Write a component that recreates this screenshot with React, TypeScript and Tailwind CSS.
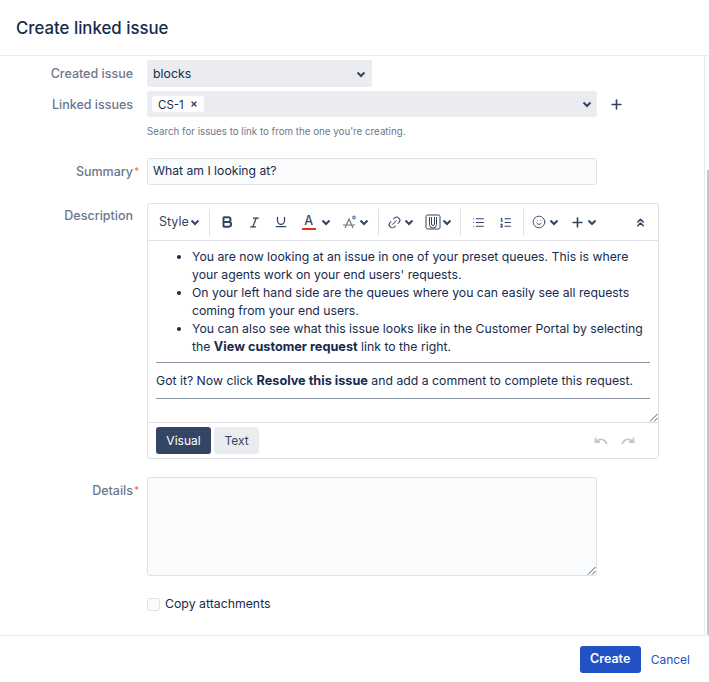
import { Plus, X, Bold, Italic, Underline, Link2, List, ListOrdered, Smile, ChevronsUp } from "lucide-react";

const Caret = ({ className = "" }: { className?: string }) => (
  <svg width="10" height="10" viewBox="0 0 10 10" fill="none" className={className}>
    <path d="M1.5 3.5 5 7l3.5-3.5" stroke="#344563" strokeWidth="2" />
  </svg>
);

const Divider = () => <span className="block w-px h-[27px] bg-[#dfe1e6]" />;

const Grip = () => (
  <svg width="9" height="9" viewBox="0 0 9 9" className="absolute right-0 bottom-0" stroke="#505f79" strokeWidth="1">
    <path d="M1 8.5 8.5 1M5 8.5 8.5 5" />
  </svg>
);

function Field({ label, required, labelClass = "leading-[27px]", children }: { label: string; required?: boolean; labelClass?: string; children: React.ReactNode }) {
  return (
    <div className="flex items-start">
      <label className={`w-[133px] shrink-0 text-right text-[12.5px] text-[#6b778c] font-medium relative ${labelClass}`}>
        {label}
        {required && <span className="absolute left-[134px] top-0 text-[10px] text-[#ff7452]">*</span>}
      </label>
      <div className="ml-[14px] flex-1 min-w-0">{children}</div>
    </div>
  );
}

export default function App() {
  return (
    <div className="w-[709px] h-[682px] bg-white flex flex-col overflow-hidden text-[#172b4d] font-['Inter',sans-serif]">
      {/* Header */}
      <header className="h-[56px] shrink-0 border-b border-[#ebecf0] flex items-center px-4">
        <h1 className="pt-[2px] text-[16.8px] font-medium text-[#172b4d]">Create linked issue</h1>
      </header>

      {/* Body */}
      <div className="flex-1 min-h-0 relative">
        <main className="h-full overflow-hidden pt-1 border-r border-[#ebecf0] mr-1">
          <Field label="Created issue">
            <div className="w-[225px] h-[27px] bg-[#ebecf0] rounded-[3px] flex items-center justify-between pl-[6px] pr-[6px] text-[12.3px]">
              <span className="pt-px">blocks</span>
              <Caret />
            </div>
          </Field>

          <div className="mt-1">
            <Field label="Linked issues">
              <div className="flex items-center">
                <div className="w-[450px] h-[26px] bg-[#ebecf0] rounded-[3px] flex items-center justify-between pl-[5px] pr-[5px]">
                  <span className="h-[16px] bg-white rounded-[3px] flex items-center px-[6px] gap-[6px] text-[11.5px]">
                    <span className="pt-[3px]">CS-1</span>
                    <X size={8} strokeWidth={4} color="#344563" />
                  </span>
                  <Caret />
                </div>
                <Plus size={15} strokeWidth={2.6} color="#344563" className="ml-[12px]" />
              </div>
              <p className="mt-[9px] text-[9.75px] leading-[12px] text-[#6b778c]">
                Search for issues to link to from the one you're creating.
              </p>
            </Field>
          </div>

          <div className="mt-[20px]">
            <Field label="Summary" required>
              <div className="w-[450px] h-[27px] bg-[#fafbfc] border border-[#dfe1e6] rounded-[3px] flex items-center px-[5px] text-[12.2px]">
                What am I looking at?
              </div>
            </Field>
          </div>

          <div className="mt-[18px]">
            <Field label="Description" labelClass="leading-[25px]">
              <div className="w-[512px] h-[256px] border border-[#dfe1e6] rounded-[3px] flex flex-col">
                {/* Toolbar */}
                <div className="h-[37px] shrink-0 border-b border-[#dfe1e6] flex items-center pl-[11px] text-[#344563]">
                  <span className="text-[12.5px] text-[#344563]">Style</span>
                  <Caret className="ml-[1px]" />
                  <span className="ml-[9px]"><Divider /></span>
                  <Bold size={14} strokeWidth={3.4} className="ml-[10px]" />
                  <Italic size={13} strokeWidth={2.4} className="ml-[14px]" />
                  <Underline size={14} strokeWidth={2.2} className="ml-[13px]" />
                  <span className="ml-[14px] w-[14px] flex flex-col items-center text-[12.5px] leading-[14px] font-medium">
                    A
                    <span className="w-[14px] h-[2px] bg-[#de350b]" />
                  </span>
                  <Caret className="ml-[5px]" />
                  <svg width="16" height="15" viewBox="0 0 16 15" fill="none" className="ml-[11px]" stroke="#6b778c" strokeWidth="1.2">
                    <path d="M3 13 7 4l4 9M1 10h12" />
                    <circle cx="12" cy="2.5" r="1.3" />
                  </svg>
                  <Caret className="ml-[1px]" />
                  <span className="ml-[9px]"><Divider /></span>
                  <Link2 size={15} strokeWidth={1.6} className="ml-[8px] -rotate-45" />
                  <Caret className="ml-[2px]" />
                  <svg width="16" height="16" viewBox="0 0 16 16" fill="none" className="ml-[11px]" stroke="#344563" strokeWidth="1">
                    <rect x="1" y="1" width="14" height="14" rx="1.5" />
                    <path d="M4.5 3v7.5a3.5 3.5 0 0 0 7 0V3M6.5 3v7a1.5 1.5 0 0 0 3 0V3" />
                  </svg>
                  <Caret className="ml-[1px]" />
                  <span className="ml-[8px]"><Divider /></span>
                  <List size={13} strokeWidth={2} className="ml-[11px]" />
                  <ListOrdered size={13} strokeWidth={2} className="ml-[14px]" />
                  <span className="ml-[11px]"><Divider /></span>
                  <Smile size={14} strokeWidth={1.5} className="ml-[8px]" />
                  <Caret className="ml-[3px]" />
                  <Plus size={15} strokeWidth={2.6} className="ml-[11px]" />
                  <Caret className="ml-[2px]" />
                  <ChevronsUp size={13} strokeWidth={3} className="ml-[37px]" />
                </div>

                {/* Content */}
                <div className="flex-1 min-h-0 relative px-2 pt-[7px] text-[12.25px] leading-[18px] text-[#172b4d]">
                  <ul className="list-disc pl-[36px]">
                    <li>You are now looking at an issue in one of your preset queues. This is where your agents work on your end users' requests.</li>
                    <li>On your left hand side are the queues where you can easily see all requests coming from your end users.</li>
                    <li>You can also see what this issue looks like in the Customer Portal by selecting the <b className="font-bold text-[12.7px]">View customer request</b> link to the right.</li>
                  </ul>
                  <hr className="mt-[6px] border-t border-[#8993a4]" />
                  <p className="mt-[9px]">
                    Got it? Now click <b className="font-bold text-[12.7px]">Resolve this issue</b> and add a comment to complete this request.
                  </p>
                  <hr className="mt-[8px] border-t border-[#8993a4]" />
                  <Grip />
                </div>

                {/* Mode tabs */}
                <div className="h-[36px] shrink-0 border-t border-[#dfe1e6] flex items-center pl-2 pr-[23px]">
                  <span className="h-[27px] w-[55px] rounded-[3px] bg-[#344563] text-white text-[12px] flex items-center justify-center">Visual</span>
                  <span className="ml-[3px] h-[27px] w-[45px] rounded-[3px] bg-[#ebecf0] text-[#344563] text-[12px] flex items-center justify-center">Text</span>
                  <svg width="14" height="10" viewBox="0 0 14 10" fill="none" stroke="#c1c7d0" strokeWidth="1.8" className="ml-auto">
                    <path d="M1.5 1.5v4.5H6" />
                    <path d="M2 6C4.5 2.5 10 2 13 8" />
                  </svg>
                  <svg width="14" height="10" viewBox="0 0 14 10" fill="none" stroke="#c1c7d0" strokeWidth="1.8" className="ml-[13px]">
                    <path d="M12.5 1.5v4.5H8" />
                    <path d="M12 6C9.5 2.5 4 2 1 8" />
                  </svg>
                </div>
              </div>
            </Field>
          </div>

          <div className="mt-[18px]">
            <Field label="Details" required>
              <div className="w-[450px] h-[99px] bg-[#fafbfc] border border-[#dfe1e6] rounded-[3px] relative">
                <Grip />
              </div>
            </Field>
          </div>

          <div className="mt-[19px] ml-[147px] flex items-center gap-[5px] text-[12.3px]">
            <span className="w-[13px] h-[13px] border border-[#dfe1e6] rounded-[3px] bg-[#fafbfc]" />
            Copy attachments
          </div>
        </main>

        {/* Scrollbar thumb */}
        <span className="absolute right-0 top-[114px] bottom-0 w-[2px] bg-[#c1c7d0]" />
      </div>

      {/* Footer */}
      <footer className="h-[47px] shrink-0 border-t border-[#ebecf0] flex items-center justify-end pr-[19px]">
        <button className="w-[61px] h-[27px] pt-px bg-[#2251c5] rounded-[3px] text-white text-[12.5px] font-semibold">Create</button>
        <a className="ml-[10px] pt-[2px] text-[12px] text-[#2251c5]">Cancel</a>
      </footer>
    </div>
  );
}
